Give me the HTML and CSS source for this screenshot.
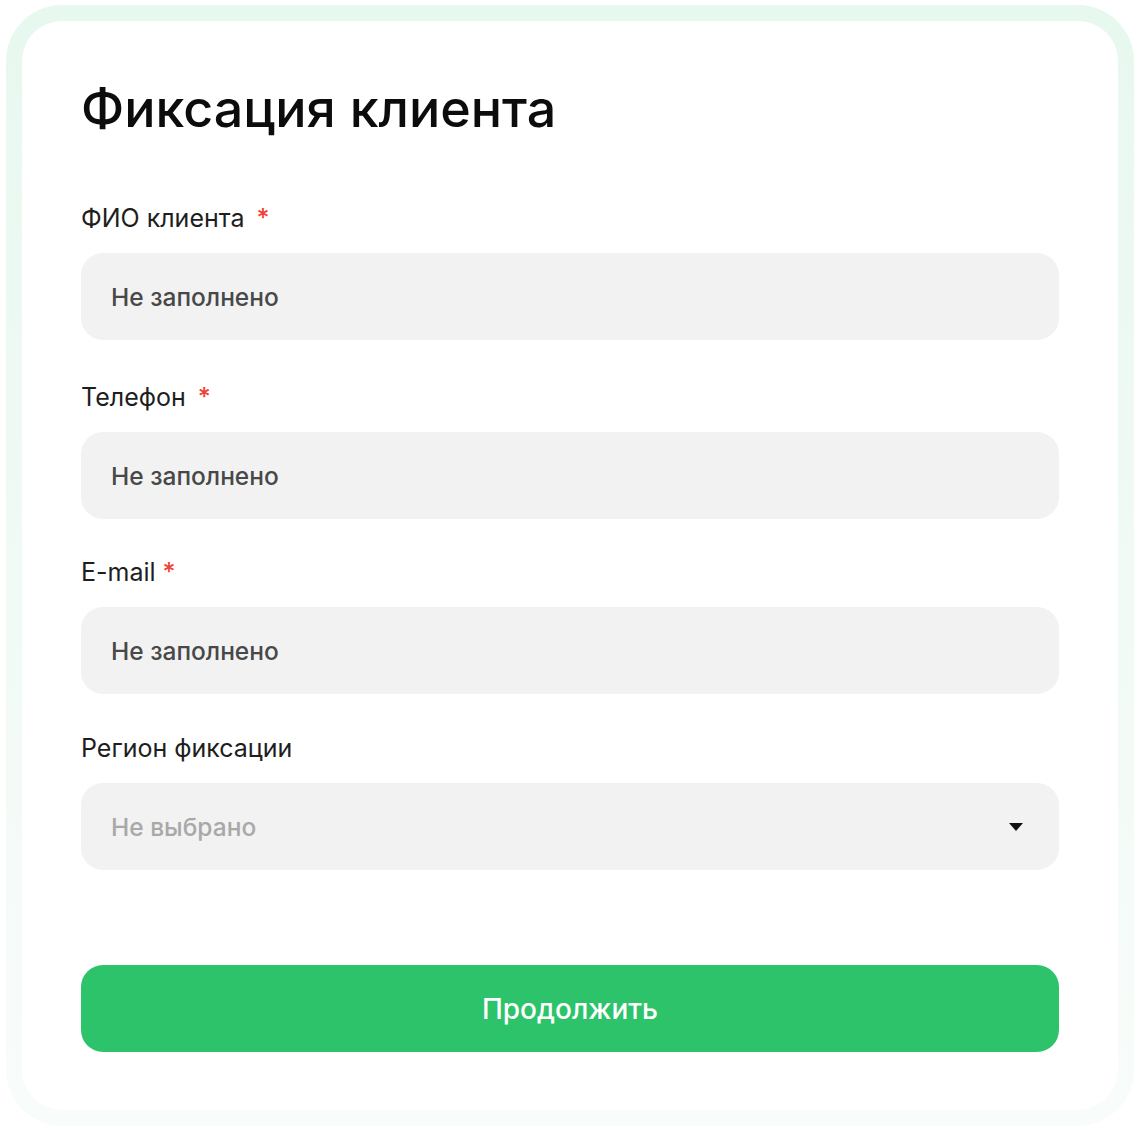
FILE: index.html
```html
<!DOCTYPE html>
<html lang="ru">
<head>
<meta charset="utf-8">
<title>Фиксация клиента</title>
<link rel="stylesheet" href="styles.css">
</head>
<body>
<div class="frame">
  <form class="card">
    <h1 class="title">Фиксация клиента</h1>

    <div class="field field-first">
      <label class="label">ФИО клиента <span class="req">*</span></label>
      <div class="input">Не заполнено</div>
    </div>

    <div class="field field-phone">
      <label class="label">Телефон <span class="req">*</span></label>
      <div class="input">Не заполнено</div>
    </div>

    <div class="field">
      <label class="label">E-mail <span class="req req-tight">*</span></label>
      <div class="input">Не заполнено</div>
    </div>

    <div class="field field-region">
      <label class="label">Регион фиксации</label>
      <div class="input select">
        <span class="placeholder">Не выбрано</span>
        <svg class="caret" width="14" height="8" viewBox="0 0 14 8"><path d="M0 0 H14 L7 8 Z" fill="#111"/></svg>
      </div>
    </div>

    <button type="button" class="btn">Продолжить</button>
  </form>
</div>
</body>
</html>
```

FILE: styles.css
```css
* { box-sizing: border-box; }
html, body {
  margin: 0;
  padding: 0;
  background: #ffffff;
}
body {
  font-family: Inter, "Noto Sans", sans-serif;
  padding: 5px 6px 5px 6px;
}
.frame {
  width: 1128px;
  height: 1121px;
  padding: 16px;
  border-radius: 56px;
  background: linear-gradient(180deg, #e7f8ef 0%, #f1faf5 50%, #f8fcfa 100%);
}
.card {
  height: 100%;
  background: #ffffff;
  border-radius: 40px;
  padding: 58px 59px 0 59px;
  display: flex;
  flex-direction: column;
}
.title {
  margin: 0;
  font-size: 52px;
  font-weight: 500;
  line-height: 60px;
  color: #0c0c0c;
  flex-shrink: 0;
}
.field {
  display: flex;
  flex-direction: column;
  margin-top: 40px;
  flex-shrink: 0;
}
.field-first { margin-top: 66px; }
.field-phone { margin-top: 44px; }
.field-region { margin-top: 41px; }
.label {
  font-size: 25px;
  line-height: 26px;
  color: #1e1e1e;
  font-weight: 400;
  margin-bottom: 22px;
}
.req {
  color: #ef4136;
  margin-left: 5px;
  font-weight: 500;
}
.req-tight { margin-left: 0; }
.input {
  height: 87px;
  border-radius: 22px;
  background: #f2f2f2;
  padding: 0 30px;
  display: flex;
  align-items: center;
  font-size: 24.5px;
  font-weight: 500;
  color: #484848;
}
.select {
  justify-content: space-between;
  padding-right: 36px;
}
.placeholder { color: #a8a8a8; }
.caret { display: block; }
.btn {
  flex-shrink: 0;
  margin-top: 95px;
  height: 87px;
  border: none;
  border-radius: 22px;
  background: #2dc36a;
  color: #ffffff;
  font-family: Inter, "Noto Sans", sans-serif;
  font-size: 28px;
  font-weight: 500;
  cursor: pointer;
}
```
